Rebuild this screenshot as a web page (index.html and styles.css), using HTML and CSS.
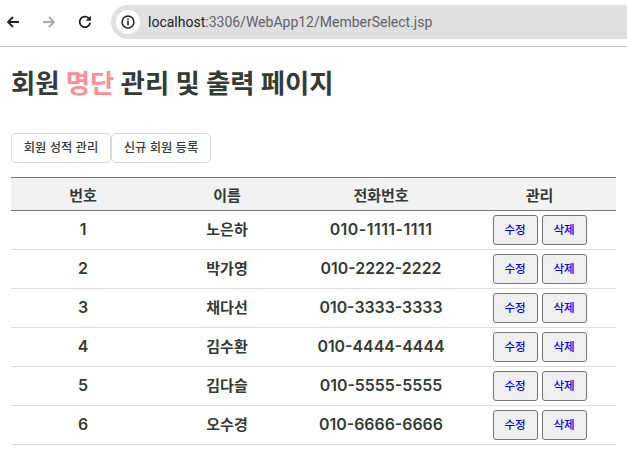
FILE: index.html
```html
<!DOCTYPE html>
<html lang="ko">
<head>
<meta charset="utf-8">
<title>MemberSelect</title>
<link rel="stylesheet" href="styles.css">
</head>
<body>
<header class="toolbar">
  <svg class="nav-icon" viewBox="0 0 16 16"><path d="M14 8H3M8 3 3 8 8 13" fill="none" stroke="#222" stroke-width="1.8"/></svg>
  <svg class="nav-icon off" viewBox="0 0 16 16"><path d="M2 8H13M8 3 13 8 8 13" fill="none" stroke="#a8a8a8" stroke-width="1.8"/></svg>
  <svg class="nav-icon" viewBox="0 0 16 16"><path d="M13.2 8.6A5.3 5.3 0 1 1 11.7 4.1" fill="none" stroke="#222" stroke-width="1.8"/><path d="M13.9 1.5V6.7H8.7Z" fill="#222"/></svg>
  <div class="omnibox">
    <span class="site-info"><svg viewBox="0 0 16 16" class="info"><circle cx="8" cy="8" r="5.9" fill="none" stroke="#222" stroke-width="1.5"/><rect x="7.2" y="7" width="1.6" height="4.2" fill="#222"/><rect x="7.2" y="4.6" width="1.6" height="1.6" fill="#222"/></svg></span>
    <span class="url"><span class="host">localhost</span>:3306/WebApp12/MemberSelect.jsp</span>
  </div>
</header>
<main class="page">
  <h1 class="title">회원 <span class="accent">명단</span> 관리 및 출력 페이지</h1>
  <nav class="actions">
    <button class="link-btn">회원 성적 관리</button><button class="link-btn">신규 회원 등록</button>
  </nav>
  <table class="members">
    <thead>
      <tr><th class="c1">번호</th><th class="c2">이름</th><th class="c3">전화번호</th><th class="c4">관리</th></tr>
    </thead>
    <tbody>
      <tr><td class="num">1</td><td class="name">노은하</td><td class="num ones">010-1111-1111</td><td class="ops"><button>수정</button><button>삭제</button></td></tr>
      <tr><td class="num">2</td><td class="name">박가영</td><td class="num">010-2222-2222</td><td class="ops"><button>수정</button><button>삭제</button></td></tr>
      <tr><td class="num">3</td><td class="name">채다선</td><td class="num">010-3333-3333</td><td class="ops"><button>수정</button><button>삭제</button></td></tr>
      <tr><td class="num">4</td><td class="name">김수환</td><td class="num">010-4444-4444</td><td class="ops"><button>수정</button><button>삭제</button></td></tr>
      <tr><td class="num">5</td><td class="name">김다슬</td><td class="num">010-5555-5555</td><td class="ops"><button>수정</button><button>삭제</button></td></tr>
      <tr><td class="num">6</td><td class="name">오수경</td><td class="num">010-6666-6666</td><td class="ops"><button>수정</button><button>삭제</button></td></tr>
    </tbody>
  </table>
</main>
</body>
</html>
```
FILE: styles.css
```css
* { box-sizing: border-box; }
html, body { margin: 0; height: 453px; overflow: hidden; background: #fff; }
body { font-family: Inter, "Noto Sans CJK KR", sans-serif; color: #343a35; }

.toolbar {
  height: 47px;
  border-bottom: 1px solid #c8c8c8;
  display: flex;
  align-items: center;
  padding: 0 0 2px 5px;
}
.nav-icon { width: 16px; height: 16px; margin-right: 20px; flex: none; }
.nav-icon:nth-child(3) { margin-right: 18px; }
.omnibox {
  flex: 1;
  height: 34px;
  background: #e0e0e0;
  border-radius: 17px 0 0 17px;
  display: flex;
  align-items: center;
  padding-left: 5px;
  font: 14px "Roboto", sans-serif;
  color: #5f6368;
}
.site-info {
  width: 24px; height: 24px; border-radius: 50%;
  background: #fff;
  display: flex; align-items: center; justify-content: center;
  margin-right: 8px;
}
.info { width: 16px; height: 16px; }
.host { color: #202124; }

.page { padding: 0 11px; }
.title {
  margin: 0;
  padding-top: 20px;
  height: 86px;
  font-size: 26.4px;
  line-height: 32px;
  font-weight: 700;
}
.accent { color: #ff8f96; }
.actions { display: flex; height: 44px; align-items: flex-start; }
.link-btn {
  height: 30px;
  width: 100px;
  background: #fff;
  border: 1px solid #d8d8d8;
  border-radius: 5px;
  font: 500 12.3px Inter, "Noto Sans CJK KR", sans-serif;
  color: #343a35;
  padding: 0 0 2px;
}
.members { width: 605px; border-collapse: collapse; table-layout: fixed; }
.members th {
  height: 33px;
  padding: 0;
  background: #f2f2f2;
  border-top: 1px solid #777;
  border-bottom: 1px solid #777;
  font-size: 15px;
  font-weight: 600;
}
.c1, .c2 { width: 144px; }
.c3 { width: 164px; }
.c4 { width: 153px; }
.members td {
  height: 39px;
  padding: 0;
  text-align: center;
  border-bottom: 1px solid #ddd;
  font-size: 15px;
  font-weight: 600;
}
.members td.name { padding-bottom: 3px; }
.members td.num { font-size: 15.9px; padding-bottom: 1px; }
.members td.ones { letter-spacing: 0.5px; }
.members .ops button {
  width: 45px;
  height: 30px;
  margin: 0 2px;
  padding: 0 0 2px;
  background: #efefef;
  border: 1px solid #767676;
  border-radius: 3px;
  color: #0000ee;
  font: 500 11.5px Inter, "Noto Sans CJK KR", sans-serif;
  vertical-align: middle;
}
```
